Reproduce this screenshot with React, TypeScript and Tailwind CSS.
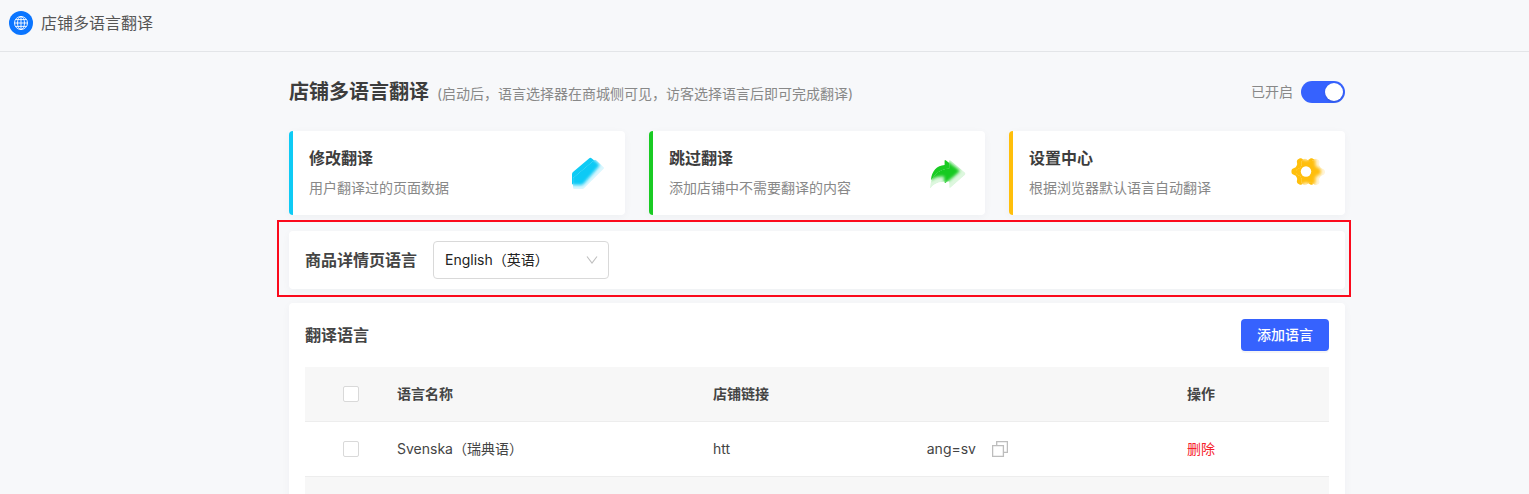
import { useId, useState } from "react";
import type { ReactNode } from "react";

const PENCIL = "M3 19.2Q3 18 4 17L20 3.4Q21.4 2.2 22.8 3.4L29.4 8.8Q30.6 10 29.4 11.4L14.4 28.6Q13.4 29.6 12 29.6H4Q3 29.6 3 28.6Z";
const PENCIL_GLASS = "M4 23L25.4 5Q26.4 4.4 27.4 5.2L34.6 12Q35.6 13 34.6 14L15 33.4Q14.2 34 13 34H5Q4 34 4 33Z";
const ARROW = "M2 25C2.6 16 8 10.4 15.6 10V6Q15.6 4.4 17 5.4L29.6 15Q30.6 16 29.6 17L17 27.6Q15.6 28.6 15.6 27V21C10 21 6 21.4 2 25Z";
const ARROW_GLASS = "M1 32.4C1.4 22 9 14 20.2 13.6V6.2Q20.2 4.4 21.8 5.6L36 17.6Q37 18.8 36 20L21.8 32.4Q20.2 33.6 20.2 32V26.6C11 26.6 6 28 2 32.8Q1 33.6 1 32.4Z";

// six-toothed gear, the tanh squares off the teeth
function gear(cx: number, cy: number, r: number) {
  const pts = Array.from({ length: 120 }, (_, i) => {
    const a = (i * Math.PI) / 60;
    const d = r + 1.9 * Math.tanh(1.6 * Math.cos(6 * a));
    return `${(cx + d * Math.cos(a)).toFixed(2)} ${(cy + d * Math.sin(a)).toFixed(2)}`;
  });
  return `M${pts.join("L")}Z`;
}

function GlassIcon({ shape, glass, color, hole }: { shape: string; glass: string; color: string; hole?: boolean }) {
  const id = useId();
  return (
    <svg className="h-9 w-9 shrink-0 overflow-visible" viewBox="0 0 36 36" aria-hidden="true">
      <defs>
        <clipPath id={`${id}c`}>
          <path d={glass} />
        </clipPath>
        <filter id={`${id}b`} x="-30%" y="-30%" width="160%" height="160%">
          <feGaussianBlur stdDeviation="1.6" />
        </filter>
      </defs>
      <path d={shape} fill={color} />
      <g clipPath={`url(#${id}c)`}>
        <path d={shape} fill="#fff" opacity="0.35" />
        <path d={glass} fill="#fff" />
        <path d={shape} fill={color} stroke={color} strokeWidth="1" filter={`url(#${id}b)`} />
        <path d={glass} fill={color} opacity="0.15" />
      </g>
      {hole && <circle cx="17" cy="16.5" r="5.2" fill="#fff" />}
    </svg>
  );
}

function FeatureCard({ title, desc, accent, icon }: { title: string; desc: string; accent: string; icon: ReactNode }) {
  return (
    <a
      href="#"
      className={`flex items-center justify-between rounded border-l-4 bg-white py-4 pl-4 pr-5 shadow-[0_2px_8px_rgba(31,56,88,0.04)] ${accent}`}
    >
      <div>
        <h2 className="mb-2 text-base/[22px] font-semibold text-[#3d3d3d]">{title}</h2>
        <p className="text-sm/[22px] text-[#888]">{desc}</p>
      </div>
      {icon}
    </a>
  );
}

const CHECKBOX =
  "block mx-auto size-4 appearance-none rounded-xs border border-[#d9d9d9] bg-white checked:border-[#3662fe] checked:bg-[#3662fe]";

export default function App() {
  const [enabled, setEnabled] = useState(true);

  return (
    <div className="h-screen overflow-hidden bg-[#f7f8fa] font-['Inter','Noto_Sans_CJK_SC',sans-serif] text-sm text-[#444]">
      <header className="flex items-center gap-2 border-b border-[#e3e5e8] pb-4 pl-[9px] pt-[11px]">
        <span className="flex size-6 items-center justify-center rounded-full bg-[#0a75ff]">
          <svg className="size-4" viewBox="0 0 16 16" fill="none" stroke="#fff" strokeWidth="0.9" aria-hidden="true">
            <circle cx="8" cy="8" r="6.5" />
            <ellipse cx="8" cy="8" rx="3.5" ry="6.5" />
            <path d="M8 1.5v13M1.5 8h13M2.6 4.6h10.8M2.6 11.4h10.8" />
          </svg>
        </span>
        <span className="text-base/6 text-[#555]">店铺多语言翻译</span>
      </header>

      <div className="pl-[105px]">
        <main className="mx-auto max-w-[1056px] pt-[26px]">
          <div className="mb-[25px] flex items-center justify-between">
            <div className="flex items-baseline gap-2">
              <h1 className="text-xl/7 font-semibold text-[#3d3d3d]">店铺多语言翻译</h1>
              <span className="text-[#888]">(启动后，语言选择器在商城侧可见，访客选择语言后即可完成翻译)</span>
            </div>
            <label className="flex items-center gap-2 text-[#888]">
              已开启
              <input
                type="checkbox"
                role="switch"
                checked={enabled}
                onChange={(e) => setEnabled(e.target.checked)}
                className="h-[22px] w-11 appearance-none rounded-full bg-[#bfbfbf] p-0.5 before:block before:size-[18px] before:rounded-full before:bg-white before:shadow-sm checked:bg-[#3662fe] checked:before:ml-auto"
              />
            </label>
          </div>

          <div className="mb-4 grid grid-cols-3 gap-6">
            <FeatureCard
              title="修改翻译"
              desc="用户翻译过的页面数据"
              accent="border-[#0ecbf5]"
              icon={<GlassIcon shape={PENCIL} glass={PENCIL_GLASS} color="#0ecbf5" />}
            />
            <FeatureCard
              title="跳过翻译"
              desc="添加店铺中不需要翻译的内容"
              accent="border-[#19cb23]"
              icon={<GlassIcon shape={ARROW} glass={ARROW_GLASS} color="#19cb23" />}
            />
            <FeatureCard
              title="设置中心"
              desc="根据浏览器默认语言自动翻译"
              accent="border-[#ffbf0b]"
              icon={<GlassIcon shape={gear(17, 16.5, 12.8)} glass={gear(21.5, 17, 12.8)} color="#ffbf0b" hole />}
            />
          </div>

          <section className="relative mb-3.5 flex items-center gap-4 rounded bg-white px-4 py-2.5 shadow-[0_2px_8px_rgba(31,56,88,0.04)]">
            <label htmlFor="detail-lang" className="text-base/6 font-semibold text-[#444]">
              商品详情页语言
            </label>
            <div className="relative">
              <select
                id="detail-lang"
                className="h-[38px] w-44 appearance-none rounded border border-[#d9d9d9] bg-white pl-[11px] pr-8 text-sm text-[#222]"
              >
                <option>English（英语）</option>
              </select>
              <svg
                className="pointer-events-none absolute right-[11px] top-[13px] size-3"
                viewBox="0 0 12 12"
                fill="none"
                stroke="#bfbfbf"
                strokeWidth="1.1"
                aria-hidden="true"
              >
                <path d="M1 2.5l5 6.5 5-6.5" />
              </svg>
            </div>
            {/* highlight frame */}
            <div className="pointer-events-none absolute -bottom-2 -left-3 -right-1.5 -top-[11px] border-2 border-[#fb0a1c]" />
          </section>

          <section className="rounded bg-white p-4 shadow-[0_2px_8px_rgba(31,56,88,0.04)]">
            <div className="mb-4 flex items-center justify-between">
              <h2 className="text-base/6 font-semibold text-[#444]">翻译语言</h2>
              <button className="h-8 rounded bg-[#3662fe] px-4 text-sm font-medium text-white shadow-[0_2px_0_rgba(0,0,0,0.04)]">
                添加语言
              </button>
            </div>

            <table className="w-full table-fixed border-separate border-spacing-0 text-left">
              <thead>
                <tr className="h-[55px] bg-[#f7f7f7] *:border-b *:border-[#ededed]">
                  <th className="w-[92px]">
                    <input type="checkbox" aria-label="全选" className={CHECKBOX} />
                  </th>
                  <th className="w-[316px] font-semibold">语言名称</th>
                  <th className="w-[474px] font-semibold">店铺链接</th>
                  <th className="font-semibold">操作</th>
                </tr>
              </thead>
              <tbody>
                <tr className="h-[55px] *:border-b *:border-[#ededed]">
                  <td>
                    <input type="checkbox" aria-label="Svenska" className={CHECKBOX} />
                  </td>
                  <td>Svenska（瑞典语）</td>
                  <td>
                    <div className="flex items-center gap-4">
                      <div className="flex w-[263px] justify-between">
                        <span>htt</span>
                        <span>ang=sv</span>
                      </div>
                      <button aria-label="复制">
                        <svg className="size-4" viewBox="0 0 16 16" fill="none" stroke="#bdbdbd" strokeWidth="1.3" aria-hidden="true">
                          <path d="M4.7 4.6v-4h10.7v10.8h-4" />
                          <path d="M0.6 4.6h10.8v10.8h-10.8z" />
                        </svg>
                      </button>
                    </div>
                  </td>
                  <td>
                    <button className="text-[#f5222d]">删除</button>
                  </td>
                </tr>
                <tr className="h-[55px] bg-[#f7f7f7]">
                  <td colSpan={4} />
                </tr>
              </tbody>
            </table>
          </section>
        </main>
      </div>
    </div>
  );
}
